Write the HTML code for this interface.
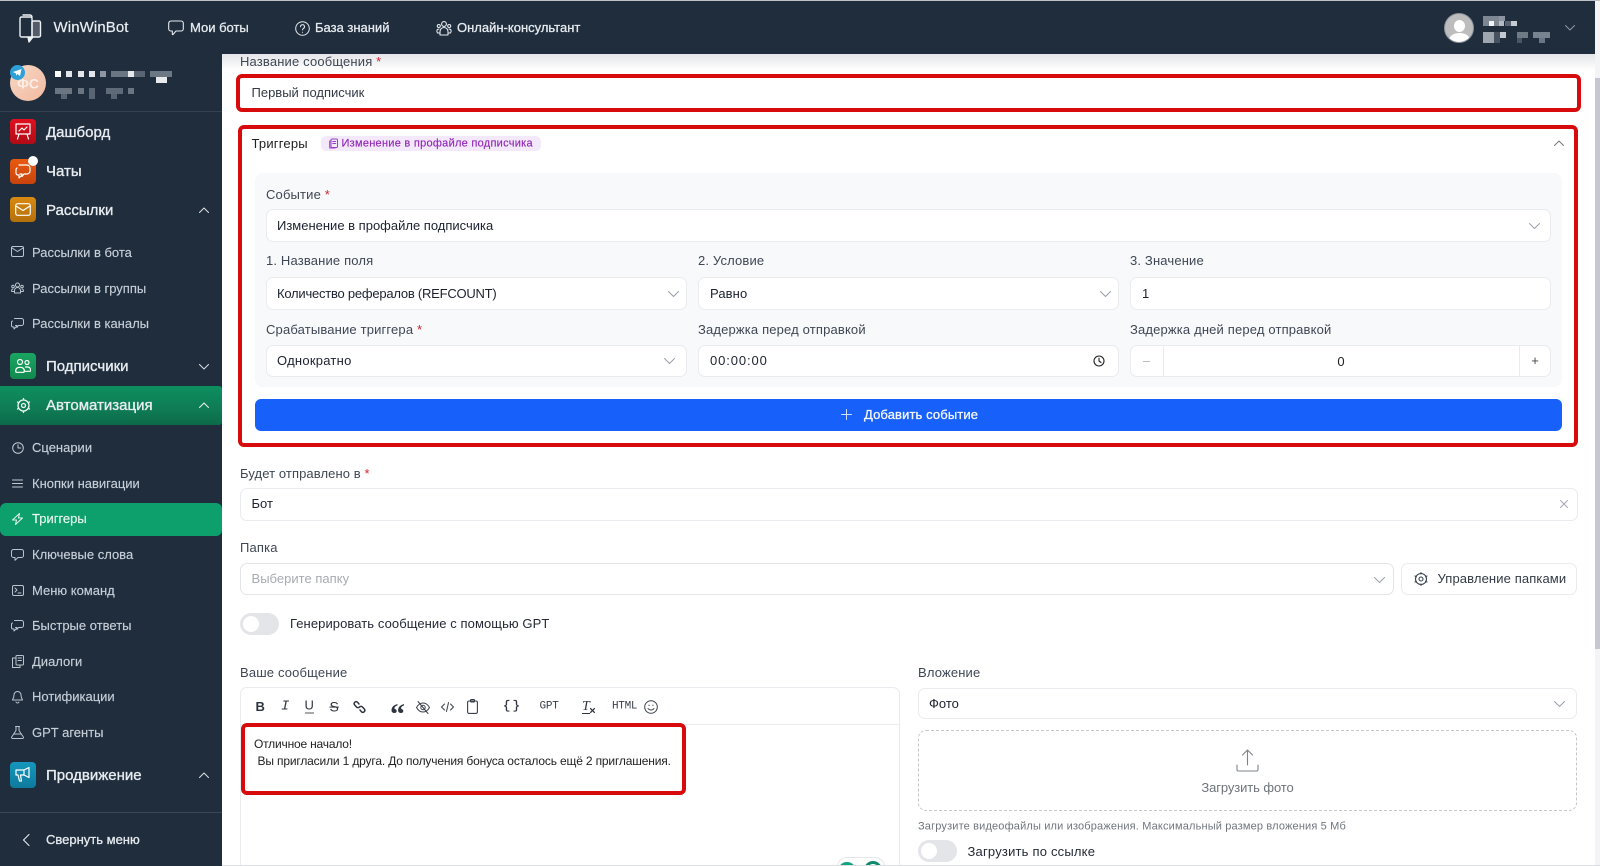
<!DOCTYPE html>
<html lang="ru"><head><meta charset="utf-8"><title>WinWinBot</title>
<style>
*{box-sizing:border-box}
html,body{margin:0;padding:0;width:1600px;height:866px;overflow:hidden;background:#fff;font-family:"Liberation Sans","Noto Sans CJK SC",sans-serif}
#root{position:relative;width:1600px;height:866px;overflow:hidden}
.a{position:absolute}
.t{position:absolute;white-space:nowrap;transform:translateY(calc(-50% + 1px));line-height:1.2}
.c{transform:translate(-50%,calc(-50% + 1px))}
.l{font-size:13px;color:#3f4754;letter-spacing:.16px}
.v{font-size:13px;color:#1c2230;letter-spacing:0}
.f{position:absolute;background:#fff;border:1px solid #e9ebef;border-radius:7px}
.s{color:#d9222a}
.m{font-size:15px;color:#e8ecf1;left:46px;-webkit-text-stroke:.35px #e8ecf1}
.n{font-size:13px;color:#c6ced8;left:32px;-webkit-text-stroke:.15px #c6ced8}
.h{font-size:13px;color:#e6eaef;-webkit-text-stroke:.3px #e6eaef}
.r{position:absolute;border:4px solid #d70b0b;border-radius:6px}
.ib{position:absolute;left:10px;width:26px;height:26px;border-radius:4px}
svg{position:absolute;overflow:visible;fill:none;stroke:currentColor;stroke-linecap:round;stroke-linejoin:round}
.p{position:absolute}
</style></head><body><div id="root">

<!-- main gradient -->
<div class="a" style="left:222px;top:54px;width:1373px;height:16px;background:linear-gradient(#e4e5e8,#fff)"></div>

<!-- form fields -->
<div class="t l" style="left:240px;top:61px">Название сообщения <span class="s">*</span></div>
<div class="t v" style="left:251.500px;top:92px;color:#333a46">Первый подписчик</div>

<div class="t" style="left:251.500px;top:142.500px;font-size:13px;color:#222;letter-spacing:.2px">Триггеры</div>
<div class="a" style="left:321px;top:136px;width:220px;height:15px;background:#f3e9fb;border-radius:5px"></div>
<svg style="left:328px;top:138px;color:#9a3fc4" width="11" height="11" viewBox="0 0 11 11" stroke-width="1"><rect x="3" y="1" width="6.500" height="8.500" rx="1"/><path d="M3 3H1.700v7h5.500V9.500M4.700 3.500h3M4.700 5.500h3"/></svg>
<div class="t" style="left:341.500px;top:142.500px;font-size:11px;color:#9327b8;letter-spacing:.27px;-webkit-text-stroke:.15px #9327b8">Изменение в профайле подписчика</div>
<svg style="left:1554px;top:140px;color:#777" width="10" height="6" viewBox="0 0 10 6" stroke-width="1"><path d="M.5 5.500 5 1l4.500 4.500"/></svg>

<div class="a" style="left:255px;top:173px;width:1307px;height:214px;background:#f8f9fb;border-radius:8px"></div>
<div class="t l" style="left:266px;top:193.500px">Событие <span class="s">*</span></div>
<div class="f" style="left:266px;top:209px;width:1285px;height:33px"></div>
<div class="t v" style="left:277px;top:225px">Изменение в профайле подписчика</div>
<svg style="left:1529px;top:223px;color:#9aa0aa" width="11" height="6" viewBox="0 0 11 6" stroke-width="1"><path d="M.5.500 5.500 5.500l5-5"/></svg>

<div class="t l" style="left:266px;top:260px">1. Название поля</div>
<div class="t l" style="left:698px;top:260px">2. Условие</div>
<div class="t l" style="left:1130px;top:260px">3. Значение</div>
<div class="f" style="left:266px;top:277px;width:421px;height:33px"></div>
<div class="f" style="left:698px;top:277px;width:421px;height:33px"></div>
<div class="f" style="left:1130px;top:277px;width:421px;height:33px"></div>
<div class="t v" style="left:277px;top:292.500px;letter-spacing:-.23px">Количество рефералов (REFCOUNT)</div>
<div class="t v" style="left:710px;top:292.500px;letter-spacing:.1px">Равно</div>
<div class="t v" style="left:1142px;top:292.500px">1</div>
<svg style="left:668px;top:291px;color:#9aa0aa" width="11" height="6" viewBox="0 0 11 6" stroke-width="1"><path d="M.5.500 5.500 5.500l5-5"/></svg>
<svg style="left:1100px;top:291px;color:#9aa0aa" width="11" height="6" viewBox="0 0 11 6" stroke-width="1"><path d="M.5.500 5.500 5.500l5-5"/></svg>

<div class="t l" style="left:266px;top:328.500px">Срабатывание триггера <span class="s">*</span></div>
<div class="t l" style="left:698px;top:328.500px">Задержка перед отправкой</div>
<div class="t l" style="left:1130px;top:328.500px">Задержка дней перед отправкой</div>
<div class="f" style="left:266px;top:345px;width:421px;height:32px"></div>
<div class="f" style="left:698px;top:345px;width:421px;height:32px"></div>
<div class="f" style="left:1130px;top:345px;width:421px;height:32px"></div>
<div class="a" style="left:1163px;top:345px;width:1px;height:32px;background:#e9ebef"></div>
<div class="a" style="left:1519px;top:345px;width:1px;height:32px;background:#e9ebef"></div>
<div class="t v" style="left:277px;top:360px;letter-spacing:.25px">Однократно</div>
<svg style="left:664px;top:358px;color:#9aa0aa" width="11" height="6" viewBox="0 0 11 6" stroke-width="1"><path d="M.5.500 5.500 5.500l5-5"/></svg>
<div class="t v" style="left:710px;top:360px;letter-spacing:.9px">00:00:00</div>
<svg style="left:1093px;top:355px;color:#222" width="12" height="12" viewBox="0 0 12 12" stroke-width="1.100"><circle cx="6" cy="6" r="5"/><path d="M6 3.200V6l2 1.500"/></svg>
<div class="t c" style="left:1341px;top:360.500px;font-size:13px;color:#222">0</div>
<div class="a" style="left:1143px;top:361px;width:7px;height:1px;background:#b9bdc4"></div>
<div class="t c" style="left:1535px;top:360px;font-size:13px;color:#444">+</div>

<div class="a" style="left:255px;top:399px;width:1307px;height:32px;background:#1860fa;border-radius:6px"></div>
<svg style="left:841px;top:409px;color:#cfe0ff" width="11" height="11" viewBox="0 0 11 11" stroke-width="1"><path d="M5.500.5v10M.5 5.500h10"/></svg>
<div class="t" style="left:864px;top:414px;font-size:13px;color:#f2f6ff;letter-spacing:.12px;-webkit-text-stroke:.3px #f2f6ff">Добавить событие</div>

<div class="t l" style="left:240px;top:472.500px;letter-spacing:.1px">Будет отправлено в <span class="s">*</span></div>
<div class="f" style="left:240px;top:488px;width:1338px;height:33px"></div>
<div class="t v" style="left:251.500px;top:503px">Бот</div>
<svg style="left:1560px;top:500px;color:#a4a9b1" width="8" height="8" viewBox="0 0 8 8" stroke-width="1"><path d="M.5.500l7 7M7.500.5l-7 7"/></svg>

<div class="t l" style="left:240px;top:546.500px">Папка</div>
<div class="f" style="left:240px;top:563px;width:1154px;height:32px;border-color:#e2e4e8"></div>
<div class="t" style="left:251.500px;top:578px;font-size:13px;color:#a7abb3;letter-spacing:.02px">Выберите папку</div>
<svg style="left:1374px;top:577px;color:#9aa0aa" width="11" height="6" viewBox="0 0 11 6" stroke-width="1"><path d="M.5.500 5.500 5.500l5-5"/></svg>
<div class="f" style="left:1401px;top:563px;width:176px;height:32px"></div>
<svg style="left:1414px;top:572px;color:#3b4350" width="14" height="14" viewBox="0 0 14 14" stroke-width="1.100"><circle cx="7" cy="7" r="5.500"/><circle cx="7" cy="7" r="2"/><path d="M7 .5v1.500M7 12v1.500M1 4l1.300.8M11.700 9.200 13 10M1 10l1.300-.8M11.700 4.800 13 4"/></svg>
<div class="t" style="left:1437.500px;top:578px;font-size:13px;color:#333a46;letter-spacing:.12px">Управление папками</div>

<div class="a" style="left:240px;top:613px;width:39px;height:22px;background:#e4e5e9;border-radius:11px"></div>
<div class="a" style="left:243px;top:616px;width:16px;height:16px;background:#fff;border-radius:50%"></div>
<div class="t" style="left:290px;top:623px;font-size:13px;color:#242a36;letter-spacing:.08px">Генерировать сообщение с помощью GPT</div>

<div class="t l" style="left:240px;top:671.500px">Ваше сообщение</div>
<div class="a" style="left:240px;top:687px;width:660px;height:190px;border:1px solid #e9ebef;border-radius:7px;background:#fff"></div>
<div class="a" style="left:241px;top:724px;width:658px;height:1px;background:#e9ebef"></div>

<!-- toolbar -->
<div class="t" style="left:255.500px;top:706px;font-size:13px;font-weight:bold;color:#2f3540">B</div>
<div class="t" style="left:281px;top:706px;font-size:14px;font-style:italic;font-family:'Liberation Mono',monospace;color:#2f3540">I</div>
<div class="t" style="left:304.500px;top:705px;font-size:13px;color:#2f3540;border-bottom:1px solid #555;line-height:14px">U</div>
<div class="t" style="left:329.500px;top:706px;font-size:14px;color:#2f3540;text-decoration:line-through">S</div>
<svg style="left:353px;top:700px;color:#2f3540" width="13" height="14" viewBox="0 0 13 14" stroke-width="1.500"><path d="M6 4 4.500 2.200a2 2 0 0 0-3 2.600L3.500 7a2 2 0 0 0 3 0M7 10l1.500 1.800a2 2 0 0 0 3-2.600L9.500 7a2 2 0 0 0-3 0"/></svg>
<div class="t c" style="left:397.500px;top:713.500px;font-size:30px;font-weight:bold;color:#2f3540;font-family:'Liberation Serif',serif">“</div>
<svg style="left:416px;top:701px;color:#3a404b" width="14" height="13" viewBox="0 0 14 13" stroke-width="1"><path d="M.5 6.500C2.500 3 4.500 2 7 2s4.500 1 6.500 4.500C11.500 10 9.500 11 7 11S2.500 10 .5 6.500z"/><circle cx="7" cy="6.500" r="2.200"/><path d="M2 .5 12 12.500"/></svg>
<svg style="left:441px;top:701px;color:#3a404b" width="13" height="12" viewBox="0 0 13 12" stroke-width="1"><path d="M3.500 3 .5 6l3 3M9.500 3l3 3-3 3M7.500 1.500 5.500 10.500"/></svg>
<svg style="left:467px;top:699px;color:#3a404b" width="11" height="15" viewBox="0 0 11 15" stroke-width="1.100"><rect x=".6" y="2" width="9.800" height="12.400" rx="1.500"/><rect x="3.500" y=".6" width="4" height="2.400" rx=".6"/></svg>
<div class="t" style="left:503px;top:705px;font-size:12px;font-family:'Liberation Mono',monospace;color:#2f3540;letter-spacing:2.500px;-webkit-text-stroke:.3px #2f3540">{}</div>
<div class="t" style="left:539.500px;top:706px;font-size:11px;font-family:'Liberation Mono',monospace;color:#3a404b;letter-spacing:-.2px">GPT</div>
<div class="t" style="left:582px;top:706px;font-size:14px;font-style:italic;font-family:'Liberation Serif',serif;color:#2f3540;border-bottom:1px solid #2f3540;line-height:13px">T</div>
<svg style="left:590px;top:708px;color:#2f3540" width="5" height="5" viewBox="0 0 6 6" stroke-width="1.500"><path d="M.7.700l4.600 4.600M5.300.700.7 5.300"/></svg>
<div class="t" style="left:612px;top:706px;font-size:11px;font-family:'Liberation Mono',monospace;color:#3a404b;letter-spacing:-.3px">HTML</div>
<svg style="left:644px;top:700px;color:#3a404b" width="14" height="14" viewBox="0 0 14 14" stroke-width="1"><circle cx="7" cy="7" r="6.300"/><path d="M4 8.500c1.500 2 4.500 2 6 0M4.800 5.200h.5M8.700 5.200h.5"/></svg>

<div class="t" style="left:254px;top:743px;font-size:12px;color:#222;letter-spacing:-.19px">Отличное начало!</div>
<div class="t" style="left:257.500px;top:759.500px;font-size:12px;color:#222;letter-spacing:-.16px">Вы пригласили 1 друга. До получения бонуса осталось ещё 2 приглашения.</div>

<!-- floating pill -->
<div class="a" style="left:837px;top:857px;width:48px;height:20px;background:#fff;border:1px solid #e4e6e9;border-radius:10px"></div>
<div class="a" style="left:838px;top:862px;width:18px;height:18px;background:#10a37f;border-radius:50%"></div>
<div class="a" style="left:863.500px;top:861px;width:18px;height:18px;background:#fff;border:3px solid #0f8a6c;border-radius:50%"></div>

<!-- attachment -->
<div class="t l" style="left:918px;top:671.500px">Вложение</div>
<div class="f" style="left:918px;top:688px;width:659px;height:31px"></div>
<div class="t v" style="left:929px;top:703px">Фото</div>
<svg style="left:1554px;top:701px;color:#9aa0aa" width="11" height="6" viewBox="0 0 11 6" stroke-width="1"><path d="M.5.500 5.500 5.500l5-5"/></svg>
<div class="a" style="left:918px;top:730px;width:659px;height:81px;border:1px dashed #c4c6ca;border-radius:8px"></div>
<svg style="left:1236px;top:749px;color:#7e838b" width="23" height="23" viewBox="0 0 23 23" stroke-width="1.100"><path d="M11.500 16V1M6.500 6l5-5 5 5M1 16v4.500a1.500 1.500 0 0 0 1.500 1.500h18a1.500 1.500 0 0 0 1.500-1.500V16"/></svg>
<div class="t c" style="left:1247.500px;top:786.500px;font-size:13px;color:#6f747c;letter-spacing:-.1px">Загрузить фото</div>
<div class="t" style="left:918px;top:825.500px;font-size:11px;color:#70757d;letter-spacing:.16px">Загрузите видеофайлы или изображения. Максимальный размер вложения 5 Мб</div>
<div class="a" style="left:918px;top:840px;width:39px;height:22px;background:#e4e5e9;border-radius:11px"></div>
<div class="a" style="left:921px;top:843px;width:16px;height:16px;background:#fff;border-radius:50%"></div>
<div class="t" style="left:967.500px;top:850.500px;font-size:13px;color:#242a36;letter-spacing:.2px">Загрузить по ссылке</div>

<!-- red annotation boxes -->
<div class="r" style="left:236px;top:74px;width:1345px;height:38px"></div>
<div class="r" style="left:238px;top:125px;width:1340px;height:322px"></div>
<div class="r" style="left:241px;top:723px;width:445px;height:72px"></div>

<!-- scrollbar -->
<div class="a" style="left:1595px;top:0;width:5px;height:866px;background:#f4f4f6"></div>
<div class="a" style="left:1595px;top:78px;width:5px;height:571px;background:#c6c7d0"></div>
<div class="a" style="left:0;top:865px;width:1600px;height:1px;background:#dcdde0"></div>

<!-- header -->
<div class="a" style="left:0;top:0;width:1600px;height:1px;background:#bfc3c8"></div>
<div class="a" style="left:0;top:1px;width:1595px;height:53px;background:#1f2d3c"></div>
<svg style="left:19px;top:14px;color:#eef1f4" width="23" height="30" viewBox="0 0 23 30" stroke-width="1.400"><rect x="1" y="3" width="12" height="20" rx="1.500"/><path d="M4 1h7a2 2 0 0 1 2 2"/><rect x="13" y="7" width="8.500" height="16" rx="1.500" fill="#eef1f4" fill-opacity=".25"/><path d="M9 23l1 5 4-5" fill="#eef1f4"/></svg>
<div class="t" style="left:53.500px;top:27px;font-size:15px;color:#e9edf1;letter-spacing:.1px;-webkit-text-stroke:.2px #e9edf1">WinWinBot</div>
<svg style="left:168px;top:20px;color:#e6eaef" width="16" height="16" viewBox="0 0 16 16" stroke-width="1.100"><path d="M3 1h10a2.300 2.300 0 0 1 2.300 2.300v5.400A2.300 2.300 0 0 1 13 11H8l-3 3.500c-.4.300-.7 0-.7-.4V11H3A2.300 2.300 0 0 1 .7 8.700V3.300A2.300 2.300 0 0 1 3 1z"/></svg>
<div class="t h" style="left:190px;top:27px">Мои боты</div>
<svg style="left:295px;top:21px;color:#e6eaef" width="15" height="15" viewBox="0 0 15 15" stroke-width="1"><circle cx="7.500" cy="7.500" r="6.800"/><path d="M5.500 5.700a2 2 0 1 1 3 1.700c-.7.400-1 .8-1 1.600M7.500 11.200v.2"/></svg>
<div class="t h" style="left:315px;top:27px">База знаний</div>
<svg style="left:436px;top:20px;color:#e6eaef" width="16" height="16" viewBox="0 0 16 16" stroke-width="1.100"><circle cx="8" cy="4" r="2.400"/><circle cx="2.800" cy="6" r="1.500"/><circle cx="13.200" cy="6" r="1.500"/><path d="M4 15v-3.500a4 4 0 0 1 8 0V15zM4 13H1.500c-1.300-2-.5-4 1.500-4M12 13h2.500c1.300-2 .5-4-1.500-4"/></svg>
<div class="t h" style="left:457px;top:27px">Онлайн-консультант</div>
<div class="a" style="left:1444px;top:13px;width:30px;height:30px;border-radius:50%;background:#bdbdbd;border:1px solid #8d949c;overflow:hidden"><div class="a" style="left:9px;top:6px;width:11px;height:12px;border-radius:50%;background:#fff"></div><div class="a" style="left:4px;top:19px;width:21px;height:14px;border-radius:50%;background:#fff"></div></div>
<div class="p" style="left:1483px;top:16px;width:16px;height:10px;background:#7d8794"></div>
<div class="p" style="left:1489px;top:21px;width:5px;height:5px;background:#f2f3f5"></div>
<div class="p" style="left:1499px;top:21px;width:5px;height:5px;background:#b6bcc5"></div>
<div class="p" style="left:1499px;top:16px;width:6px;height:5px;background:#8b94a0"></div>
<div class="p" style="left:1505px;top:21px;width:6px;height:5px;background:#596372"></div>
<div class="p" style="left:1511px;top:21px;width:6px;height:5px;background:#c6cbd2"></div>
<div class="p" style="left:1483px;top:32px;width:11px;height:11px;background:#9ea6b0"></div>
<div class="p" style="left:1494px;top:32px;width:6px;height:11px;background:#475261"></div>
<div class="p" style="left:1500px;top:32px;width:6px;height:6px;background:#c2c8cf"></div>
<div class="p" style="left:1517px;top:32px;width:11px;height:6px;background:#6f7a87"></div>
<div class="p" style="left:1517px;top:38px;width:5px;height:5px;background:#4b5665"></div>
<div class="p" style="left:1533px;top:32px;width:17px;height:6px;background:#788390"></div>
<div class="p" style="left:1539px;top:38px;width:6px;height:5px;background:#6b7684"></div>
<svg style="left:1565px;top:25px;color:#8d97a3" width="10" height="6" viewBox="0 0 10 6" stroke-width="1"><path d="M.5.500 5 5l4.500-4.500"/></svg>

<!-- sidebar -->
<div class="a" style="left:0;top:54px;width:222px;height:812px;background:#1f2d3c"></div>
<div class="a" style="left:10px;top:65px;width:36px;height:36px;border-radius:50%;background:linear-gradient(135deg,#f6d8c4,#f2b9a0)"></div>
<div class="t c" style="left:28px;top:82.500px;font-size:14px;font-weight:bold;color:#fbeee6">ФС</div>
<div class="a" style="left:10px;top:65px;width:15px;height:15px;border-radius:50%;background:#2f9fd8"></div>
<svg style="left:13px;top:69px;color:#fff" width="9" height="7" viewBox="0 0 9 7"><path d="M0 3 8.500 0 7 7 4.500 5 3 6.500 3 4.500z" fill="#fff" stroke="none"/></svg>
<div class="p" style="left:55px;top:71px;width:6px;height:6px;background:#fff"></div>
<div class="p" style="left:66px;top:71px;width:6px;height:6px;background:#e4e7ea"></div>
<div class="p" style="left:78px;top:71px;width:6px;height:6px;background:#e4e7ea"></div>
<div class="p" style="left:89px;top:71px;width:6px;height:6px;background:#e4e7ea"></div>
<div class="p" style="left:100px;top:71px;width:6px;height:6px;background:#8d96a2"></div>
<div class="p" style="left:111px;top:71px;width:17px;height:6px;background:#6b7683"></div>
<div class="p" style="left:128px;top:71px;width:6px;height:6px;background:#e6e9ec"></div>
<div class="p" style="left:134px;top:71px;width:11px;height:6px;background:#5a6573"></div>
<div class="p" style="left:150px;top:71px;width:22px;height:6px;background:#6d7885"></div>
<div class="p" style="left:156px;top:77px;width:11px;height:6px;background:#e8ebee"></div>
<div class="p" style="left:55px;top:88px;width:17px;height:6px;background:#6b7582"></div>
<div class="p" style="left:61px;top:94px;width:6px;height:5px;background:#5a6573"></div>
<div class="p" style="left:78px;top:88px;width:6px;height:6px;background:#6b7582"></div>
<div class="p" style="left:89px;top:88px;width:6px;height:11px;background:#5a6573"></div>
<div class="p" style="left:106px;top:88px;width:17px;height:6px;background:#5f6a78"></div>
<div class="p" style="left:111px;top:94px;width:6px;height:5px;background:#5a6573"></div>
<div class="p" style="left:128px;top:88px;width:6px;height:6px;background:#6b7582"></div>
<div class="a" style="left:0;top:111px;width:222px;height:1px;background:#35424f"></div>

<div class="ib" style="top:119px;height:25px;background:linear-gradient(#e0101f,#b00c16)"></div>
<svg style="left:15px;top:123px;color:#fff" width="16" height="17" viewBox="0 0 16 17" stroke-width="1.200"><path d="M1 1h14v10H1zM4 11l-1.500 5M12 11l1.500 5M4 8l3-3 2 2 3-3"/></svg>
<div class="t m" style="top:131.500px">Дашборд</div>
<div class="ib" style="top:159px;height:25px;background:linear-gradient(#e85a10,#c8430c)"></div>
<svg style="left:15px;top:164px;color:#fff" width="16" height="15" viewBox="0 0 16 15" stroke-width="1.200"><path d="M4 1h8a3 3 0 0 1 3 3v3a3 3 0 0 1-3 3H9l-2 2.500V10H5M2 4a2 2 0 0 0-1 2v3a2 2 0 0 0 2 2h1v3l3-3"/></svg>
<div class="a" style="left:28px;top:156px;width:10px;height:10px;background:#fff;border-radius:50%"></div>
<div class="t m" style="top:170.500px">Чаты</div>
<div class="ib" style="top:197px;height:25px;background:linear-gradient(#d88a10,#b5700c)"></div>
<svg style="left:15px;top:203px;color:#fff" width="16" height="13" viewBox="0 0 16 13" stroke-width="1.200"><rect x=".7" y=".7" width="14.600" height="11.600" rx="2"/><path d="M1 3l7 4.500L15 3"/></svg>
<div class="t m" style="top:209.500px">Рассылки</div>
<svg style="left:199px;top:207px;color:#d4dae1" width="10" height="6" viewBox="0 0 10 6" stroke-width="1.100"><path d="M.5 5.500 5 1l4.500 4.500"/></svg>

<svg style="left:11px;top:246px;color:#bcc5cf" width="13" height="11" viewBox="0 0 13 11" stroke-width="1"><rect x=".5" y=".5" width="12" height="10" rx="1.500"/><path d="M1 2l5.500 3.500L12 2"/></svg>
<div class="t n" style="top:251.500px">Рассылки в бота</div>
<svg style="left:11px;top:282px;color:#bcc5cf" width="13" height="12" viewBox="0 0 13 12" stroke-width="1"><circle cx="6.500" cy="3" r="2"/><circle cx="2" cy="4.500" r="1.300"/><circle cx="11" cy="4.500" r="1.300"/><path d="M3.500 11V8.500a3 3 0 0 1 6 0V11zM3 9.500H.7c-.4-1.500.2-2.500 1.300-2.500M10 9.500h2.300c.4-1.500-.2-2.500-1.300-2.500"/></svg>
<div class="t n" style="top:287.500px">Рассылки в группы</div>
<svg style="left:11px;top:318px;color:#bcc5cf" width="13" height="12" viewBox="0 0 13 12" stroke-width="1"><path d="M3.500.5h7a2 2 0 0 1 2 2v3a2 2 0 0 1-2 2h-3L6 9.500v-2H4.500M1.500 3a1.500 1.500 0 0 0-1 1.500v3a1.500 1.500 0 0 0 1.500 1.500h1v2l2.500-2.500"/></svg>
<div class="t n" style="top:323px">Рассылки в каналы</div>

<div class="ib" style="top:353px;background:linear-gradient(#1aa562,#118a4f)"></div>
<svg style="left:15px;top:359px;color:#fff" width="16" height="14" viewBox="0 0 16 14" stroke-width="1.200"><circle cx="5" cy="3" r="2.500"/><circle cx="12" cy="3.500" r="2"/><path d="M1 13.300c-1-2.500.5-5 3.500-5h1c3 0 4.500 2.500 3.500 5zM10.500 8h2c2.500 0 3.500 2 2.800 4.300H10"/></svg>
<div class="t m" style="top:366px">Подписчики</div>
<svg style="left:199px;top:364px;color:#d4dae1" width="10" height="6" viewBox="0 0 10 6" stroke-width="1.100"><path d="M.5.500 5 5l4.500-4.500"/></svg>

<div class="a" style="left:0;top:386px;width:222px;height:39px;background:linear-gradient(#0d8f5e,#0f7b55 60%,#0c6a4a);border-radius:0 3px 3px 0"></div>
<svg style="left:16px;top:398px;color:#eaf6f0" width="15" height="15" viewBox="0 0 15 15" stroke-width="1.300"><circle cx="7.500" cy="7.500" r="5.500"/><circle cx="7.500" cy="7.500" r="2"/><path d="M7.500.5v1.500M7.500 13v1.500M1.500 4l1.300.8M12.200 10.200l1.300.8M1.500 11l1.300-.8M12.200 4.800l1.300-.8"/></svg>
<div class="t m" style="top:405px">Автоматизация</div>
<svg style="left:199px;top:402px;color:#e3efe9" width="10" height="6" viewBox="0 0 10 6" stroke-width="1.100"><path d="M.5 5.500 5 1l4.500 4.500"/></svg>

<svg style="left:12px;top:442px;color:#c3cbd5" width="12" height="12" viewBox="0 0 12 12" stroke-width="1"><circle cx="6" cy="6" r="5.300"/><path d="M6 2.800V6h2.800"/></svg>
<div class="t n" style="top:447px">Сценарии</div>
<svg style="left:12px;top:479px;color:#c3cbd5" width="11" height="9" viewBox="0 0 11 9" stroke-width="1"><path d="M.5 1h10M.5 4.500h10M.5 8h10"/></svg>
<div class="t n" style="top:483px">Кнопки навигации</div>
<div class="a" style="left:0;top:503px;width:222px;height:33px;background:#0da06c;border-radius:6px"></div>
<svg style="left:12px;top:513px;color:#e3f4ec" width="11" height="12" viewBox="0 0 11 12" stroke-width="1"><path d="M7.500.5.500 7h4l-1 4.500 7-6.500h-4z"/></svg>
<div class="t n" style="top:518px;color:#eaf7f1;-webkit-text-stroke:.15px #eaf7f1">Триггеры</div>
<svg style="left:11px;top:549px;color:#bcc5cf" width="13" height="12" viewBox="0 0 13 12" stroke-width="1"><path d="M2.500.5h8a2 2 0 0 1 2 2v4a2 2 0 0 1-2 2H7l-3 2.800V8.500H2.500a2 2 0 0 1-2-2v-4a2 2 0 0 1 2-2z"/></svg>
<div class="t n" style="top:554px">Ключевые слова</div>
<svg style="left:12px;top:585px;color:#bcc5cf" width="12" height="11" viewBox="0 0 12 11" stroke-width="1"><rect x=".5" y=".5" width="11" height="10" rx="1.500"/><path d="M3 3l2 2-2 2M6 8h3"/></svg>
<div class="t n" style="top:589.500px">Меню команд</div>
<svg style="left:11px;top:620px;color:#bcc5cf" width="13" height="12" viewBox="0 0 13 12" stroke-width="1"><path d="M3.500.5h7a2 2 0 0 1 2 2v3a2 2 0 0 1-2 2h-3L6 9.500v-2H4.500M1.500 3a1.500 1.500 0 0 0-1 1.500v3a1.500 1.500 0 0 0 1.500 1.500h1v2l2.500-2.500"/></svg>
<div class="t n" style="top:625px">Быстрые ответы</div>
<svg style="left:12px;top:655px;color:#bcc5cf" width="12" height="13" viewBox="0 0 12 13" stroke-width="1"><rect x="4" y=".5" width="7.500" height="9.500" rx="1"/><path d="M4 3H.5v9.500H8V10M6 3h3.500M6 5.500h3.500"/></svg>
<div class="t n" style="top:660.500px">Диалоги</div>
<svg style="left:12px;top:691px;color:#bcc5cf" width="11" height="13" viewBox="0 0 11 13" stroke-width="1"><path d="M5.500.5a3.500 3.500 0 0 1 3.500 3.500c0 3 1.500 4.500 1.500 5H.5c0-.5 1.500-2 1.500-5A3.500 3.500 0 0 1 5.500.5zM4 11c.5 1.300 2.500 1.300 3 0"/></svg>
<div class="t n" style="top:696px">Нотификации</div>
<svg style="left:11px;top:726px;color:#bcc5cf" width="13" height="13" viewBox="0 0 13 13" stroke-width="1"><path d="M4.500.5h4M5 .5v4L.7 11c-.5 1 0 1.500 1 1.500h9.600c1 0 1.500-.5 1-1.500L8 4.500v-4M2.800 8h7.400"/></svg>
<div class="t n" style="top:732px">GPT агенты</div>
<div class="ib" style="top:762px;background:linear-gradient(#1597bd,#0e7a9c)"></div>
<svg style="left:15px;top:767px;color:#fff" width="16" height="15" viewBox="0 0 16 15" stroke-width="1.200"><path d="M1 3h8l5-2.500v10L9 8H5.500L6.500 14H4.500L3 8H1zM9 3v5"/></svg>
<div class="t m" style="top:774.500px">Продвижение</div>
<svg style="left:199px;top:772px;color:#d4dae1" width="10" height="6" viewBox="0 0 10 6" stroke-width="1.100"><path d="M.5 5.500 5 1l4.500 4.500"/></svg>
<div class="a" style="left:0;top:812px;width:222px;height:1px;background:#3a4754"></div>
<svg style="left:23px;top:834px;color:#e6eaef" width="7" height="12" viewBox="0 0 7 12" stroke-width="1.100"><path d="M6 .5.500 6 6 11.500"/></svg>
<div class="t" style="left:46px;top:839px;font-size:13px;color:#e6eaef;-webkit-text-stroke:.3px #e6eaef">Свернуть меню</div>
</div></body></html>
